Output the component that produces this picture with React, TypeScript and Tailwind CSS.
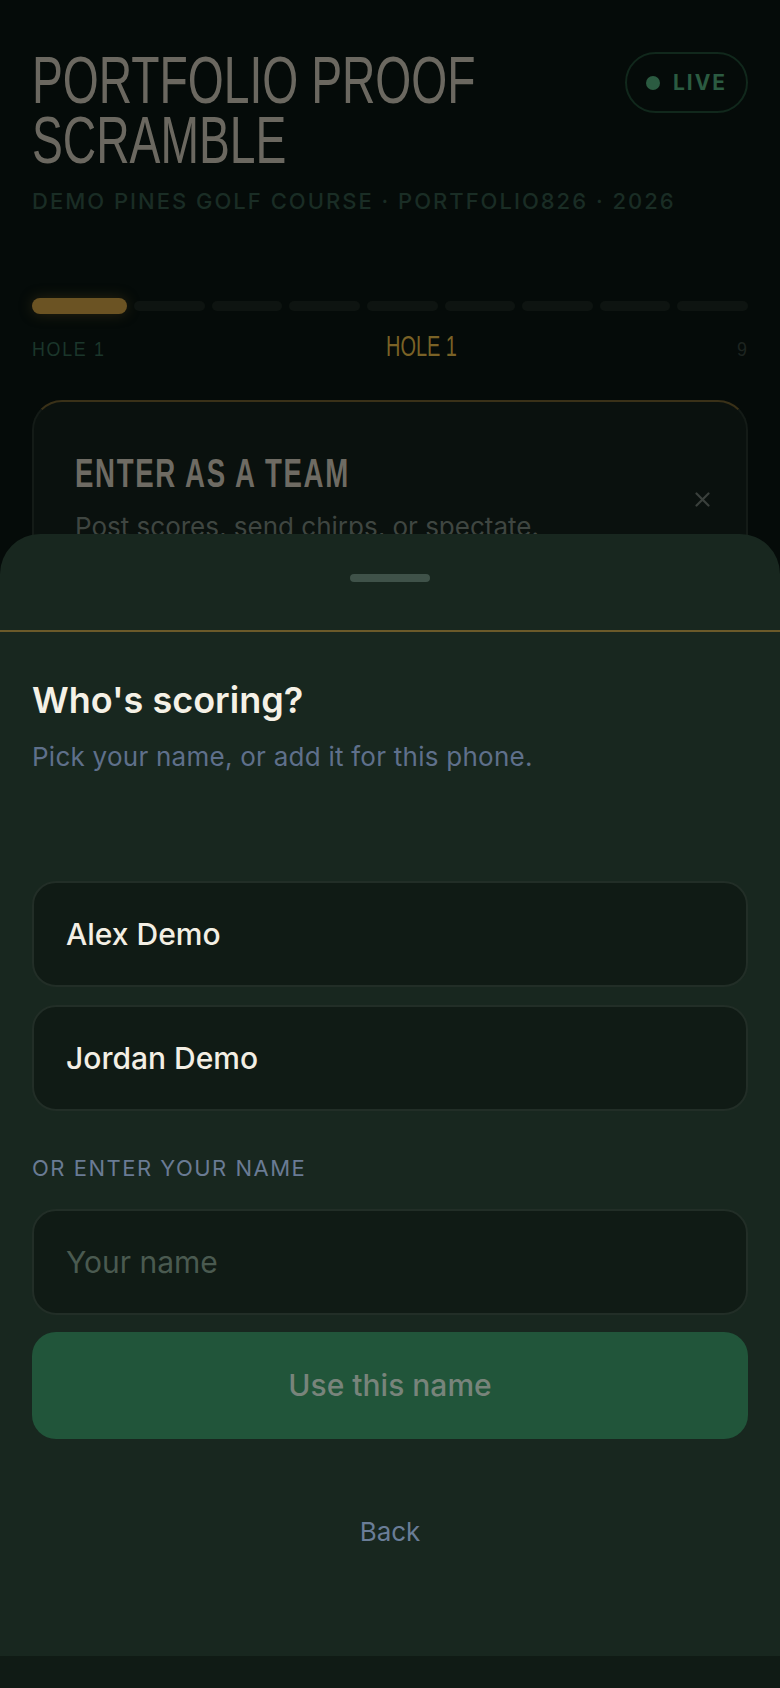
import React from "react";

export default function App() {
  const cond = "font-['Liberation_Sans',Arial,sans-serif]";
  return (
    <div className="relative h-[1688px] w-full overflow-hidden bg-[#050b09] font-['Inter',sans-serif]">
      <div className="px-8 pt-[50px]">
        {/* Header */}
        <div className="flex items-start justify-between">
          <div className={`w-[460px] text-[67px] leading-[60px] text-[#6b6860] ${cond}`}>
            <div className="origin-left scale-x-[0.69] whitespace-nowrap">PORTFOLIO PROOF</div>
            <div className="origin-left scale-x-[0.69] whitespace-nowrap">SCRAMBLE</div>
          </div>
          <div className="mt-[2px] flex h-[61px] w-[123px] items-center justify-center gap-[13px] rounded-full border-2 border-[#11281c]">
            <span className="h-[14px] w-[14px] rounded-full bg-[#2b5b41]" />
            <span className="text-[21px] font-bold leading-none tracking-[2px] text-[#2b5b41]">LIVE</span>
          </div>
        </div>
        <div className="mt-[18px] whitespace-nowrap text-[22px] font-medium leading-[26px] tracking-[2px] text-[#1a2d25]">
          DEMO PINES GOLF COURSE · PORTFOLIO826 · 2026
        </div>

        {/* Progress */}
        <div className="mt-[84px] flex h-4 items-center gap-[7px]">
          <div className="h-4 w-[95px] shrink-0 rounded-full bg-[#6b5323] shadow-[0_0_14px_rgba(107,83,35,0.35)]" />
          {[1, 2, 3, 4, 5, 6, 7, 8].map((i) => (
            <div key={i} className="h-[10px] flex-1 rounded-full bg-[#0e1411]" />
          ))}
        </div>

        {/* Hole labels */}
        <div className={`mt-[17px] flex items-baseline justify-between ${cond}`}>
          <div className="w-[73px] text-[21px] leading-[30px] text-[#1b362b]">
            <div className="origin-left scale-x-[0.85] whitespace-nowrap tracking-[2px]">HOLE 1</div>
          </div>
          <div className="w-[71px] text-[30px] leading-[30px] text-[#7a6226]">
            <div className="origin-left scale-x-[0.665] whitespace-nowrap">HOLE 1</div>
          </div>
          <div className="w-[11px] text-[21px] leading-[30px] text-[#1d2420]">
            <div className="origin-left scale-x-[0.85] whitespace-nowrap">9</div>
          </div>
        </div>

        {/* Card */}
        <div className="mt-[36px] flex items-center justify-between rounded-[30px] border-2 border-[#141b17] border-t-[#3a3118] bg-[#0a110e] pb-[50px] pl-[41px] pr-[36px] pt-[51px]">
          <div>
            <div className={`text-[40px] font-bold leading-[40px] text-[#6e6b63] ${cond}`}>
              <div className="origin-left scale-x-[0.69] whitespace-nowrap tracking-[2.4px]">ENTER AS A TEAM</div>
            </div>
            <p className="mt-4 text-[26px] leading-[36px] text-[#3f4641]">Post scores, send chirps, or spectate.</p>
          </div>
          <svg width="15" height="15" viewBox="0 0 15 15" className="shrink-0">
            <path d="M1.5 1.5 L13.5 13.5 M13.5 1.5 L1.5 13.5" stroke="#3a403c" strokeWidth="2.2" strokeLinecap="round" />
          </svg>
        </div>
      </div>

      {/* Bottom nav behind the sheet */}
      <div className="absolute inset-x-0 bottom-0 h-[80px] bg-[#101b15]" />

      {/* Sheet */}
      <div className="absolute inset-x-0 top-[534px] z-10 h-[1122px] rounded-t-[40px] bg-[#18271f]">
        <div className="mx-auto mt-[40px] h-2 w-20 rounded-full bg-[#3f5249]" />
        <div className="mt-[48px] h-[2px] bg-[#6b5a2a]" />
        <div className="px-8 pt-[46px]">
          <h2 className="text-[36px] font-semibold leading-[44px] text-[#f5f1e6]">Who's scoring?</h2>
          <p className="mt-[17px] text-[26px] leading-[36px] tracking-[0.25px] text-[#5f708b]">Pick your name, or add it for this phone.</p>

          <div className="mt-[106px] flex flex-col gap-[18px]">
            {["Alex Demo", "Jordan Demo"].map((n) => (
              <div
                key={n}
                className="flex h-[106px] items-center rounded-[24px] border-2 border-[#222e27] bg-[#101b15] px-8 text-[30px] font-medium text-[#f3efe4]"
              >
                {n}
              </div>
            ))}
          </div>

          <div className="mt-[44px] text-[22px] leading-[26px] tracking-[1.5px] text-[#6a7b94]">OR ENTER YOUR NAME</div>

          <input
            placeholder="Your name"
            className="mt-[28px] block h-[106px] w-full rounded-[24px] border-2 border-[#222e27] bg-[#101b15] px-8 text-[30px] text-[#f3efe4] outline-none placeholder:text-[#4a5a50]"
          />

          <button className="mt-[17px] flex h-[107px] w-full items-center justify-center rounded-[24px] bg-[#21553a] text-[30px] font-medium text-[#78847b]">
            Use this name
          </button>

          <div className="mt-[75px] text-center text-[26px] leading-[36px] text-[#6a7d97]">Back</div>
        </div>
      </div>
    </div>
  );
}
